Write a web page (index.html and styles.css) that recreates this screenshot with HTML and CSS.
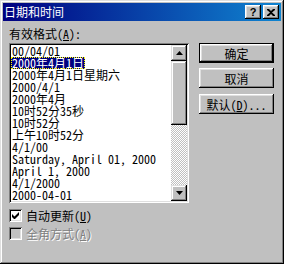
FILE: index.html
```html
<!DOCTYPE html>
<html lang="zh-CN">
<head>
    <meta charset="UTF-8">
    <title>日期和时间</title>
    <link rel="stylesheet" href="styles.css">
</head>
<body>
    <div class="ventana">
        <div class="titulo">
            <span class="titulo-texto">日期和时间</span>
            <div class="titulo-botones">
                <div class="tb-boton tb-ayuda">?</div>
                <div class="tb-boton">
                    <svg width="8" height="7" viewBox="0 0 8 7"><path d="M0 0h2l2 2 2-2h2v1l-3 2.5 3 2.5v1h-2l-2-2-2 2h-2v-1l3-2.5-3-2.5z" fill="#000"/></svg>
                </div>
            </div>
        </div>

        <div class="cuerpo">
            <div class="izquierda">
                <div class="etiqueta">有效格式(<u>A</u>):</div>
                <div class="lista">
                    <ul class="items">
                        <li><span>00/04/01</span></li>
                        <li><span class="sel">2000年4月1日</span></li>
                        <li><span>2000年4月1日星期六</span></li>
                        <li><span>2000/4/1</span></li>
                        <li><span>2000年4月</span></li>
                        <li><span>10时52分35秒</span></li>
                        <li><span>10时52分</span></li>
                        <li><span>上午10时52分</span></li>
                        <li><span>4/1/00</span></li>
                        <li><span>Saturday, April 01, 2000</span></li>
                        <li><span>April 1, 2000</span></li>
                        <li><span>4/1/2000</span></li>
                        <li><span>2000-04-01</span></li>
                    </ul>
                    <div class="barra">
                        <div class="flecha"><svg width="7" height="4" viewBox="0 0 7 4"><path d="M3.5 0L7 4H0z" fill="#000"/></svg></div>
                        <div class="pulgar"></div>
                        <div class="pista"></div>
                        <div class="flecha"><svg width="7" height="4" viewBox="0 0 7 4"><path d="M0 0h7L3.5 4z" fill="#000"/></svg></div>
                    </div>
                </div>

                <div class="opcion">
                    <div class="casilla">
                        <svg width="7" height="7" viewBox="0 0 7 7"><path d="M0 2v3l2 2h1l4-4V0L2.5 4.5z" fill="#000"/></svg>
                    </div>
                    <span>自动更新(<u>U</u>)</span>
                </div>
                <div class="opcion desactivada">
                    <div class="casilla"></div>
                    <span>全角方式(<u>A</u>)</span>
                </div>
            </div>

            <div class="derecha">
                <div class="boton defecto">确定</div>
                <div class="boton">取消</div>
                <div class="boton tercero">默认(<u>D</u>)...</div>
            </div>
        </div>
    </div>
</body>
</html>
```
FILE: styles.css
```css
body {
    margin: 0;
    font-family: "Noto Sans CJK SC", sans-serif;
    font-size: 12px;
    font-feature-settings: "hwid";
}

.ventana {
    width: 284px;
    height: 264px;
    box-sizing: border-box;
    padding: 3px;
    background-color: #c0c0c0;
    box-shadow: inset -1px -1px #000, inset 1px 1px #dfdfdf,
                inset -2px -2px #808080, inset 2px 2px #fff;
}

.titulo {
    height: 18px;
    display: flex;
    align-items: center;
    justify-content: space-between;
    background: linear-gradient(to right, #000080, #1084d0);
    color: #fff;
}

.titulo-texto {
    padding-left: 1px;
    line-height: 18px;
}

.titulo-botones {
    display: flex;
    gap: 2px;
    padding-right: 2px;
}

.tb-boton {
    width: 16px;
    height: 14px;
    box-sizing: border-box;
    display: flex;
    align-items: center;
    justify-content: center;
    background-color: #c0c0c0;
    color: #000;
    box-shadow: inset -1px -1px #000, inset 1px 1px #fff,
                inset -2px -2px #808080, inset 2px 2px #dfdfdf;
}

.tb-ayuda {
    font-family: "Liberation Sans", sans-serif;
    font-weight: bold;
    font-size: 11px;
    line-height: 14px;
}

.cuerpo {
    display: flex;
    padding: 7px 0 0 6px;
}

.etiqueta {
    line-height: 12px;
    height: 12px;
    margin-bottom: 3px;
}

.lista {
    width: 180px;
    height: 160px;
    box-sizing: border-box;
    padding: 2px;
    display: flex;
    background-color: #fff;
    box-shadow: inset 1px 1px #808080, inset -1px -1px #fff,
                inset 2px 2px #000, inset -2px -2px #dfdfdf;
}

.items {
    flex: 1;
    margin: 0;
    padding: 0;
    list-style: none;
}

.items li {
    height: 12px;
    line-height: 12px;
    white-space: nowrap;
}

.items span {
    display: inline-block;
    padding: 0 1px;
}

.items .sel {
    background-color: #000080;
    color: #fff;
    outline: 1px dotted #ffff00;
    outline-offset: -1px;
}

.barra {
    width: 16px;
    display: flex;
    flex-direction: column;
}

.flecha,
.pulgar {
    background-color: #c0c0c0;
    box-shadow: inset -1px -1px #000, inset 1px 1px #dfdfdf,
                inset -2px -2px #808080, inset 2px 2px #fff;
}

.flecha {
    height: 16px;
    display: flex;
    align-items: center;
    justify-content: center;
}

.pulgar {
    height: 64px;
}

.pista {
    flex: 1;
    background: repeating-conic-gradient(#c0c0c0 0 25%, #fff 0 50%) 0 0 / 2px 2px;
}

.opcion {
    display: flex;
    align-items: center;
    gap: 4px;
    height: 13px;
    margin-top: 6px;
    line-height: 13px;
}

.opcion + .opcion {
    margin-top: 5px;
}

.casilla {
    width: 13px;
    height: 13px;
    box-sizing: border-box;
    display: flex;
    align-items: center;
    justify-content: center;
    background-color: #fff;
    box-shadow: inset 1px 1px #808080, inset -1px -1px #fff,
                inset 2px 2px #000, inset -2px -2px #dfdfdf;
}

.desactivada {
    color: #808080;
    text-shadow: 1px 1px #fff;
}

.desactivada .casilla {
    background-color: #c0c0c0;
}

.derecha {
    display: flex;
    flex-direction: column;
    gap: 5px;
    padding: 15px 0 0 10px;
}

.boton {
    width: 75px;
    height: 20px;
    box-sizing: border-box;
    display: flex;
    align-items: center;
    justify-content: center;
    background-color: #c0c0c0;
    box-shadow: inset -1px -1px #000, inset 1px 1px #fff,
                inset -2px -2px #808080, inset 2px 2px #dfdfdf;
}

.defecto {
    box-shadow: inset 0 0 0 1px #000, inset -2px -2px #000, inset 2px 2px #fff,
                inset -3px -3px #808080, inset 3px 3px #dfdfdf;
}

.tercero {
    margin-top: 1px;
}
```
